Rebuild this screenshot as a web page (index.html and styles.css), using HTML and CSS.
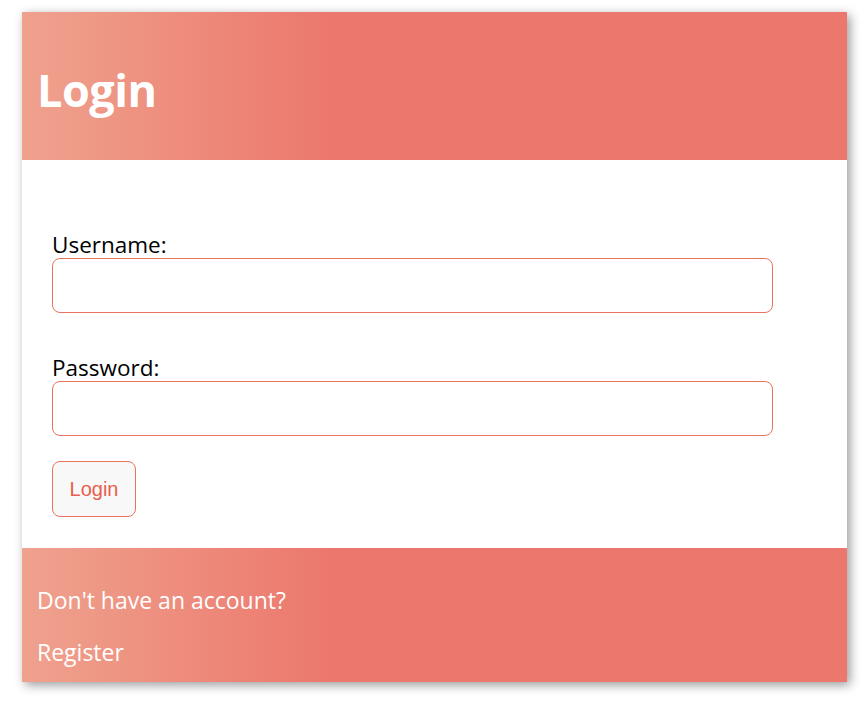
FILE: index.html
```html
<!DOCTYPE html>
<html lang="en">
<head>
<meta charset="utf-8">
<title>Login</title>
<link rel="stylesheet" href="styles.css">
</head>
<body>
<div class="card">
  <header class="card-header">
    <h1 class="title">Login</h1>
  </header>
  <form class="card-body">
    <label class="field-label" for="username">Username:</label>
    <input class="field-input" id="username" type="text">
    <label class="field-label field-label--spaced" for="password">Password:</label>
    <input class="field-input" id="password" type="password">
    <button class="btn" type="button">Login</button>
  </form>
  <footer class="card-footer">
    <p class="footer-text">Don't have an account?</p>
    <p class="footer-text footer-link">Register</p>
  </footer>
</div>
</body>
</html>
```

FILE: styles.css
```css
html, body {
  margin: 0;
  padding: 0;
  background: #ffffff;
}
body {
  padding: 12px 20px 20px 22px;
  font-family: "Open Sans", "Lato", sans-serif;
}
.card {
  width: 825px;
  background: #ffffff;
  box-shadow: 3px 3px 10px rgba(0, 0, 0, 0.4);
}
.card-header,
.card-footer {
  background: linear-gradient(to right, #efa28e 0%, #ec776c 38%, #ec776c 100%);
  color: #ffffff;
}
.card-header {
  height: 148px;
  padding: 0 15px;
  display: flex;
  align-items: center;
  box-sizing: border-box;
}
.title {
  margin: 0;
  font-size: 45px;
  font-weight: 700;
  line-height: 1;
  padding-top: 6px;
  letter-spacing: -0.5px;
}
.card-body {
  display: flex;
  flex-direction: column;
  align-items: flex-start;
  padding: 72px 30px 31px;
}
.field-label {
  display: block;
  font-size: 22.5px;
  line-height: 26px;
  color: #000000;
}
.field-label--spaced {
  margin-top: 42px;
}
.field-input {
  display: block;
  width: 721px;
  height: 55px;
  box-sizing: border-box;
  margin: 0;
  border: 1px solid #e8735f;
  border-radius: 8px;
  background: #ffffff;
  padding: 0 10px;
  font: inherit;
}
.btn {
  margin-top: 25px;
  width: 84px;
  height: 56px;
  box-sizing: border-box;
  border: 1px solid #e8735f;
  border-radius: 8px;
  background: #f9f8f8;
  color: #e8604d;
  font-family: "Liberation Sans", Arial, sans-serif;
  font-size: 20px;
  padding: 0;
}
.card-footer {
  height: 134px;
  box-sizing: border-box;
  padding: 39px 15px 0;
}
.footer-text {
  margin: 0;
  font-size: 23px;
  line-height: 26px;
}
.footer-link {
  margin-top: 26px;
}
```
